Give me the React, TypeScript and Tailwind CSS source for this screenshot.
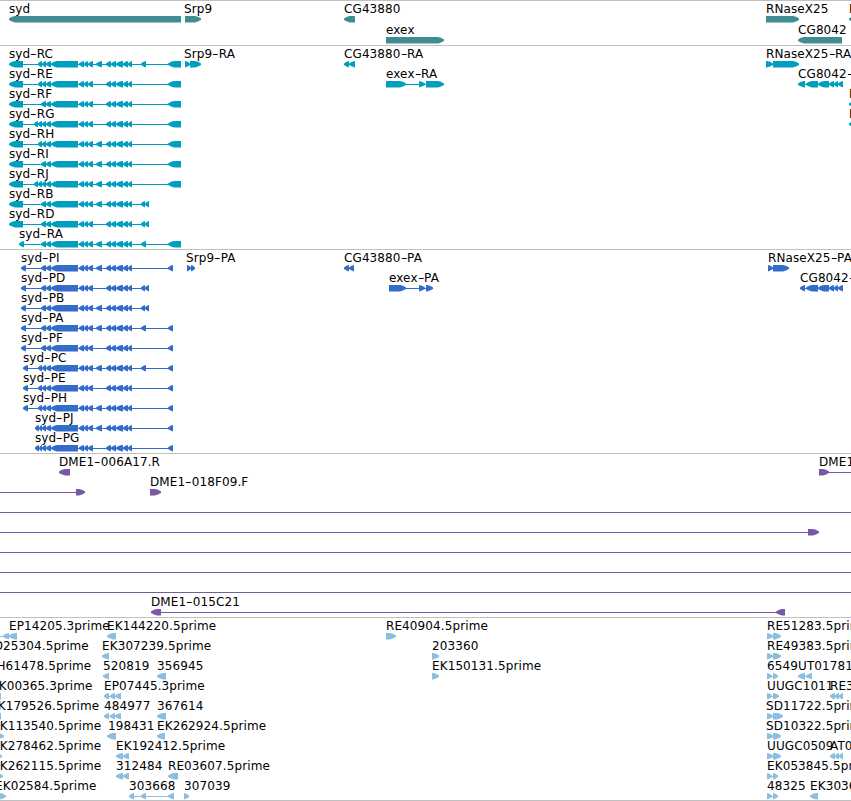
import { Fragment } from 'react';

type Span = [number, number];

interface Feature {
  label?: string;
  /** label position, when it differs from the first exon */
  x?: number;
  dir?: 'left' | 'right';
  exons?: Span[];
  line?: Span;
}

interface TrackProps {
  color: string;
  rows: Feature[][];
  rowClass?: string;
  className?: string;
}

const WIDTH = 851;

// exon groups shared by the syd transcripts
const UTR: Span = [9, 23];
const CORE: Span[] = [[51, 78], [79, 84], [84, 88], [88, 93]];
const MID: Span = [96, 102];
const TAIL: Span[] = [[106, 111], [111, 116], [116, 123], [123, 128], [128, 132]];
const FAR: Span = [141, 146];
const SHORT: Span[] = [[41, 46], [46, 51]];
const TRIPLE: Span[] = [[38, 42], [42, 46], [46, 51]];
const QUAD: Span[] = [[34, 38], [38, 42], [42, 46], [46, 51]];
const FIVE: Span[] = [[35, 39], [39, 42], [42, 46], [46, 51]];
const LAST: Span = [168, 181];
const CDS_LAST: Span = [168, 173];
const END_B: Span[] = [[141, 145], [145, 149]];

const syd = (label: string, ...exons: Span[]): Feature => ({ label, exons });

const genes: Feature[][] = [
  [
    { label: 'syd', exons: [[9, 181]] },
    { label: 'Srp9', x: 184, dir: 'right', exons: [[185, 201]] },
    { label: 'CG43880', exons: [[344, 355]] },
    { label: 'RNaseX25', dir: 'right', exons: [[766, 799]] },
    { label: 'R', exons: [[849, 870]] },
  ],
  [
    { label: 'exex', dir: 'right', exons: [[386, 444]] },
    { label: 'CG8042', exons: [[798, 842]] },
  ],
];

const transcripts: Feature[][] = [
  [
    syd('syd-RC', UTR, ...TRIPLE, ...CORE, MID, ...TAIL, FAR, LAST),
    { label: 'Srp9-RA', x: 184, dir: 'right', exons: [[185, 190], [190, 201]] },
    { label: 'CG43880-RA', exons: [[344, 349], [349, 355]] },
    { label: 'RNaseX25-RA', dir: 'right', exons: [[766, 773], [773, 799]] },
  ],
  [
    syd('syd-RE', UTR, ...TRIPLE, ...CORE, ...TAIL, LAST),
    { label: 'exex-RA', dir: 'right', exons: [[386, 406], [419, 425], [426, 444]] },
    { label: 'CG8042-RA', exons: [[798, 805], [806, 818], [818, 829], [829, 834], [834, 838], [838, 843]] },
  ],
  [syd('syd-RF', UTR, ...SHORT, ...CORE, ...TAIL, LAST), { label: 'R', exons: [[849, 870]] }],
  [syd('syd-RG', UTR, ...QUAD, ...CORE, ...TAIL, LAST), { label: 'R', exons: [[849, 870]] }],
  [syd('syd-RH', UTR, ...TRIPLE, ...CORE, MID, ...TAIL, LAST)],
  [syd('syd-RI', UTR, ...SHORT, ...CORE, MID, ...TAIL, LAST)],
  [syd('syd-RJ', UTR, ...QUAD, ...CORE, MID, ...TAIL, LAST)],
  [syd('syd-RB', UTR, ...SHORT, ...CORE, MID, ...TAIL, ...END_B)],
  [syd('syd-RD', UTR, ...SHORT, ...CORE, ...TAIL, ...END_B)],
  [syd('syd-RA', [19, 24], ...SHORT, ...CORE, MID, ...TAIL, FAR, LAST)],
];

const proteins: Feature[][] = [
  [
    syd('syd-PI', [21, 26], ...SHORT, ...CORE, MID, ...TAIL, CDS_LAST),
    { label: 'Srp9-PA', x: 186, dir: 'right', exons: [[187, 191], [191, 195]] },
    { label: 'CG43880-PA', exons: [[344, 349], [349, 354]] },
    { label: 'RNaseX25-PA', dir: 'right', exons: [[768, 773], [773, 789]] },
  ],
  [
    syd('syd-PD', [21, 26], ...SHORT, ...CORE, ...TAIL, ...END_B),
    { label: 'exex-PA', dir: 'right', exons: [[389, 406], [419, 425], [426, 433]] },
    { label: 'CG8042-PA', exons: [[800, 805], [806, 818], [818, 829], [829, 834], [834, 838], [838, 843]] },
  ],
  [syd('syd-PB', [21, 26], ...SHORT, ...CORE, MID, ...TAIL, ...END_B)],
  [syd('syd-PA', [21, 26], ...SHORT, ...CORE, MID, ...TAIL, FAR, CDS_LAST)],
  [syd('syd-PF', [21, 26], ...SHORT, ...CORE, ...TAIL, CDS_LAST)],
  [syd('syd-PC', [23, 28], ...TRIPLE, ...CORE, MID, ...TAIL, FAR, CDS_LAST)],
  [syd('syd-PE', [23, 28], ...TRIPLE, ...CORE, ...TAIL, CDS_LAST)],
  [syd('syd-PH', [23, 28], ...TRIPLE, ...CORE, MID, ...TAIL, CDS_LAST)],
  [syd('syd-PJ', ...FIVE, ...CORE, MID, ...TAIL, CDS_LAST)],
  [syd('syd-PG', ...FIVE, ...CORE, ...TAIL, CDS_LAST)],
];

const clones: Feature[][] = [
  [
    { label: 'DME1-006A17.R', exons: [[59, 70]] },
    { label: 'DME1', dir: 'right', exons: [[819, 829]], line: [819, 851] },
  ],
  [
    { dir: 'right', exons: [[76, 85]], line: [0, 85] },
    { label: 'DME1-018F09.F', dir: 'right', exons: [[150, 161]] },
  ],
  [{ line: [0, 851] }],
  [{ dir: 'right', exons: [[808, 819]], line: [0, 819] }],
  [{ line: [0, 851] }],
  [{ line: [0, 851] }],
  [{ line: [0, 851] }],
  [{ label: 'DME1-015C21', exons: [[151, 161], [776, 785]] }],
];

const TRIO: Span[] = [[104, 109], [110, 115], [115, 121]];
const RIGHT_TRIO: Span[] = [[830, 835], [835, 839], [839, 843]];

const ests: Feature[][] = [
  [
    { label: 'EP14205.3prime', x: 9, exons: [[3, 9], [9, 17]], line: [0, 17] },
    { label: 'EK144220.5prime', exons: [[107, 116]] },
    { label: 'RE40904.5prime', dir: 'right', exons: [[386, 396]] },
    { label: 'RE51283.5prime', dir: 'right', exons: [[767, 773], [773, 781]] },
  ],
  [
    { label: 'SD25304.5prime', x: -14 },
    { label: 'EK307239.5prime', exons: [[102, 109]] },
    { label: '203360', dir: 'right', exons: [[432, 439]] },
    { label: 'RE49383.5prime', dir: 'right', exons: [[767, 773], [773, 781]] },
  ],
  [
    { label: 'RH61478.5prime', x: -12 },
    { label: '520819', exons: [[103, 109]] },
    { label: '356945', exons: [[157, 166]] },
    { label: 'EK150131.5prime', dir: 'right', exons: [[432, 439]] },
    { label: '6549', dir: 'right', exons: [[767, 772], [773, 778]] },
    { label: 'UT01781', exons: [[798, 805], [806, 812]] },
  ],
  [
    { label: 'EK00365.3prime', x: -9, exons: [[-8, 1]] },
    { label: 'EP07445.3prime', exons: TRIO },
    { label: 'UUGC1011', dir: 'right', exons: [[767, 772], [773, 779]] },
    { label: 'RE3', exons: RIGHT_TRIO },
  ],
  [
    { label: 'EK179526.5prime', x: -10, exons: [[-8, 1]] },
    { label: '484977', exons: TRIO },
    { label: '367614', exons: [[157, 166]] },
    { label: 'SD11722.5prime', x: 766, dir: 'right', exons: [[767, 773], [773, 783]] },
  ],
  [
    { label: 'EK113540.5prime', x: -8, dir: 'right', exons: [[-6, 4]] },
    { label: '198431', x: 108, exons: [[107, 116]] },
    { label: 'EK262924.5prime', exons: [[157, 165]] },
    { label: 'SD10322.5prime', x: 766, dir: 'right', exons: [[767, 773], [773, 781]] },
  ],
  [
    { label: 'EK278462.5prime', x: -8, dir: 'right', exons: [[-6, 2]] },
    { label: 'EK192412.5prime', exons: [[116, 123], [123, 129]] },
    { label: 'UUGC0509', dir: 'right', exons: [[767, 773], [773, 781]] },
    { label: 'AT0', exons: RIGHT_TRIO },
  ],
  [
    { label: 'EK262115.5prime', x: -8, dir: 'right', exons: [[-6, 3]] },
    { label: '312484', exons: [[116, 123], [123, 129]] },
    { label: 'RE03607.5prime', exons: [[168, 178]] },
    { label: 'EK053845.5prime', dir: 'right', exons: [[767, 772], [773, 778]] },
  ],
  [
    { label: 'EK02584.5prime', x: -5, dir: 'right', exons: [[-6, 6]] },
    { label: '303668', exons: [[129, 134], [141, 146], [168, 174]] },
    { label: '307039', dir: 'right', exons: [[184, 189]] },
    { label: '48325', dir: 'right', exons: [[767, 772], [773, 778]] },
    { label: 'EK3036', exons: [[810, 818]] },
  ],
];

function exonPoints([a, b]: Span, dir: 'left' | 'right') {
  const head = Math.min(6, b - a);
  const [tip, tail, step] = dir === 'left' ? [a, b, head] : [b, a, -head];
  return [
    [tip, 17.5],
    [tip + step / 2, 15.8],
    [tip + step, 15],
    [tail, 15],
    [tail, 21.4],
    [tip + step, 21.4],
    [tip + step / 2, 20.6],
    [tip, 19],
  ].join(' ');
}

function FeatureShape({ exons = [], dir = 'left', line }: Feature) {
  const start = line?.[0] ?? exons[0]?.[0] ?? 0;
  const end = line?.[1] ?? exons[exons.length - 1]?.[1] ?? 0;
  return (
    <g>
      <rect x={start} y={18} width={end - start} height={1} shapeRendering="crispEdges" />
      {exons.map((exon) => (
        <polygon key={exon[0]} points={exonPoints(exon, dir)} />
      ))}
    </g>
  );
}

// hyphens are stretched so that they stay readable between name and suffix
function Label({ text, left }: { text: string; left?: number }) {
  return (
    <span className="absolute top-px text-black whitespace-nowrap" style={{ left }}>
      {text.split('-').map((part, i) => (
        <Fragment key={i}>
          {i > 0 && <span className="inline-block w-[6.5px] origin-left scale-x-150">-</span>}
          {part}
        </Fragment>
      ))}
    </span>
  );
}

function Track({ color, rows, rowClass = 'h-5', className = '' }: TrackProps) {
  return (
    <section className={`border-t border-[#c0c0c0] ${color} ${className}`}>
      {rows.map((features, i) => (
        <div key={i} className={`relative ${rowClass}`}>
          <svg width={WIDTH} height={22} className="absolute top-0 left-0 fill-current">
            {features.map((feature, j) => (
              <FeatureShape key={j} {...feature} />
            ))}
          </svg>
          {features.map((feature, j) =>
            feature.label ? (
              <Label key={j} text={feature.label} left={feature.x ?? feature.exons?.[0][0]} />
            ) : null
          )}
        </div>
      ))}
    </section>
  );
}

export default function App() {
  return (
    <main className="h-[801px] w-[851px] overflow-hidden bg-white font-['DejaVu_Sans',sans-serif] text-[12px] leading-[15px] tracking-[0.1px]">
      <Track color="text-[#408c93]" rows={genes} rowClass="h-[21px]" className="h-[45px]" />
      <Track color="text-[#009fc0]" rows={transcripts} className="h-[204px]" />
      <Track color="text-[#336dcc]" rows={proteins} className="h-[204px]" />
      <Track color="text-[#7759a8]" rows={clones} className="h-[164px]" />
      <Track color="text-[#8bbfdf]" rows={ests} className="h-[184px] border-b" />
    </main>
  );
}
